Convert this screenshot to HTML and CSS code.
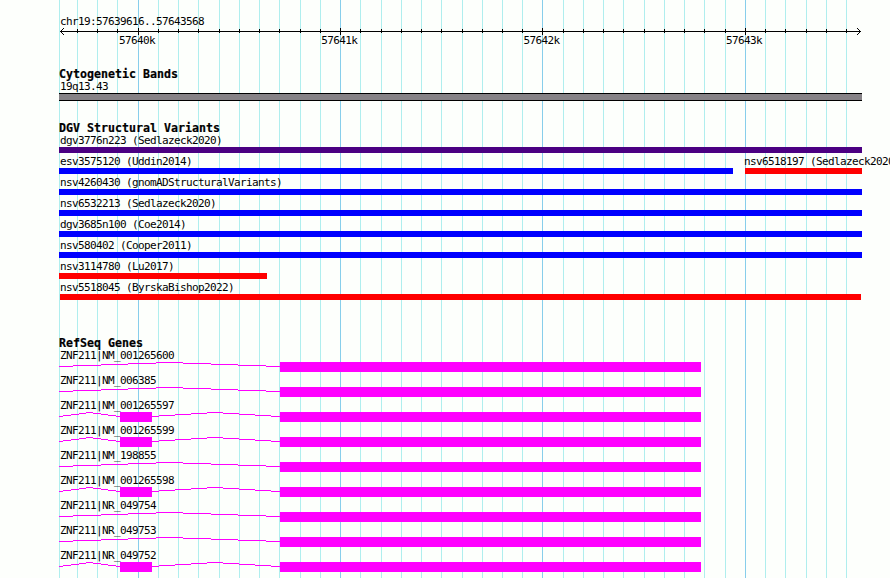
FILE: index.html
```html
<!DOCTYPE html>
<html lang="en">
<head>
    <meta charset="UTF-8">
    <meta name="viewport" content="width=device-width, initial-scale=1.0">
    <title>chr19:57639616..57643568</title>
    <link rel="stylesheet" href="styles.css">
</head>
<body>
    <div class="browser">
        <svg class="grid" width="890" height="578">
            <path class="minor" id="minorGrid"/>
            <path class="major" id="majorGrid"/>
        </svg>

        <div class="ruler">
            <div class="label">chr19:57639616..57643568</div>
            <svg class="axis" width="803" height="7">
                <path d="M1 3.5H802"/>
                <path id="ticks"/>
                <path d="M1 3h1v1h-1z M2 2h1v1h-1z M2 4h1v1h-1z M3 1h1v1h-1z M3 5h1v1h-1z M4 0h1v1h-1z M4 6h1v1h-1z" class="arrow"/>
                <path d="M801 3h1v1h-1z M800 2h1v1h-1z M800 4h1v1h-1z M799 1h1v1h-1z M799 5h1v1h-1z M798 0h1v1h-1z M798 6h1v1h-1z" class="arrow"/>
            </svg>
            <div class="positions">
                <span>57640k</span>
                <span>57641k</span>
                <span>57642k</span>
                <span>57643k</span>
            </div>
        </div>

        <div class="track cytoband">
            <h2>Cytogenetic Bands</h2>
            <div class="label">19q13.43</div>
            <div class="band"></div>
        </div>

        <div class="track variants">
            <h2>DGV Structural Variants</h2>
            <div class="row">
                <div class="feature full"><div class="label">dgv3776n223 (Sedlazeck2020)</div><div class="bar complex"></div></div>
            </div>
            <div class="row">
                <div class="feature uddin"><div class="label">esv3575120 (Uddin2014)</div><div class="bar loss-gain"></div></div>
                <div class="feature right"><div class="label">nsv6518197 (Sedlazeck2020)</div><div class="bar loss"></div></div>
            </div>
            <div class="row">
                <div class="feature full"><div class="label">nsv4260430 (gnomADStructuralVariants)</div><div class="bar loss-gain"></div></div>
            </div>
            <div class="row">
                <div class="feature full"><div class="label">nsv6532213 (Sedlazeck2020)</div><div class="bar loss-gain"></div></div>
            </div>
            <div class="row">
                <div class="feature full"><div class="label">dgv3685n100 (Coe2014)</div><div class="bar loss-gain"></div></div>
            </div>
            <div class="row">
                <div class="feature full"><div class="label">nsv580402 (Cooper2011)</div><div class="bar loss-gain"></div></div>
            </div>
            <div class="row">
                <div class="feature lu"><div class="label">nsv3114780 (Lu2017)</div><div class="bar loss"></div></div>
            </div>
            <div class="row">
                <div class="feature full"><div class="label">nsv5518045 (ByrskaBishop2022)</div><div class="bar loss inset"></div></div>
            </div>
        </div>

        <div class="track genes">
            <h2>RefSeq Genes</h2>
            <div id="geneList"></div>
        </div>
    </div>

    <script>
        const minor = [59, 77, 97, 117, 158, 178, 198, 219, 239, 259, 279, 300, 320,
            360, 381, 401, 421, 441, 462, 482, 502, 522, 563, 583, 603, 623, 644,
            664, 684, 704, 725, 765, 785, 806, 826, 846];
        const major = [138, 340, 542, 745];

        const lines = (xs, y, h) => xs.map(x => `M${x + 0.5} ${y}v${h}`).join('');
        document.getElementById('minorGrid').setAttribute('d', lines(minor, 0, 578));
        document.getElementById('majorGrid').setAttribute('d', lines(major, 0, 578));

        // axis starts at x = 59, the first grid line has no tick
        document.getElementById('ticks').setAttribute('d',
            lines(minor.slice(1).map(x => x - 59), 1, 4) + lines(major.map(x => x - 59), 0, 7));

        // each intron climbs one pixel per step up to the middle and back down
        function intron(stops) {
            let d = '';
            for (let i = 0; i < stops.length - 1; i++) {
                d += `M${stops[i]} ${Math.abs(i - 4) + 0.5}H${stops[i + 1]}`;
            }
            return `<path class="intron" d="${d}"/>`;
        }

        const single = intron([0, 14, 42, 69, 97, 124, 152, 179, 207, 221]);
        const spliced = intron([0, 4, 12, 20, 27, 34, 42, 49, 57, 61]) +
            '<rect class="exon" x="61" width="32" height="10"/>' +
            intron([93, 100, 116, 132, 148, 164, 180, 196, 212, 221]);

        const genes = [
            ['NM_001265600', single],
            ['NM_006385', single],
            ['NM_001265597', spliced],
            ['NM_001265599', spliced],
            ['NM_198855', single],
            ['NM_001265598', spliced],
            ['NR_049754', single],
            ['NR_049753', single],
            ['NR_049752', spliced]
        ];

        document.getElementById('geneList').innerHTML = genes.map(([name, parts]) => `
            <div class="gene">
                <div class="label">ZNF211|${name}</div>
                <svg width="642" height="10">${parts}<rect class="exon" x="221" width="421" height="10"/></svg>
            </div>`).join('');
    </script>
</body>
</html>
```

FILE: styles.css
```css
* {
    margin: 0;
    padding: 0;
    box-sizing: border-box;
}

body {
    background-color: #fdfffc;
    overflow: hidden;
}

.browser {
    position: relative;
    width: 890px;
    height: 578px;
    padding: 16px 0 0 59px;
    overflow: hidden;
    color: #000;
    font-family: "DejaVu Sans Mono", "Liberation Mono", monospace;
    font-size: 11px;
}

svg {
    display: block;
    shape-rendering: crispEdges;
}

.grid {
    position: absolute;
    top: 0;
    left: 0;
    z-index: -1;
}

.grid path {
    fill: none;
    stroke-width: 1;
}

.grid .minor {
    stroke: #afeeee;
}

.grid .major {
    stroke: #87ceeb;
}

.label,
.positions {
    height: 12px;
    line-height: 12px;
    letter-spacing: -0.622px;
    white-space: nowrap;
}

.label {
    padding-left: 1px;
}

h2 {
    height: 13px;
    line-height: 13px;
    font-size: 11.6px;
    font-weight: bold;
    letter-spacing: 0.016px;
    -webkit-text-stroke: 0.2px #000;
}

/* ruler */
.ruler {
    height: 52px;
}

.axis path {
    fill: none;
    stroke: #000;
}

.axis .arrow {
    fill: #000;
    stroke: none;
}

.positions {
    display: flex;
    gap: 166.3px;
    padding-left: 60px;
}

.positions span {
    width: 36px;
}

/* tracks */
.cytoband {
    height: 54px;
}

.band {
    width: 803px;
    height: 8px;
    background-color: #868286;
    border-top: 1px solid #000;
    border-bottom: 1px solid #000;
}

.variants {
    height: 215px;
}

.row {
    display: flex;
    height: 21px;
}

.full {
    width: 803px;
}

.uddin {
    width: 674px;
    margin-right: 12px;
}

.right {
    width: 117px;
}

.right .label {
    padding-left: 0;
    margin-left: -1px;
}

.lu {
    width: 208px;
}

.bar {
    height: 6px;
}

.complex {
    background-color: #4b0082;
}

.loss-gain {
    background-color: #0000ff;
}

.loss {
    background-color: #ff0000;
}

.inset {
    margin: 0 1px;
}

.gene {
    height: 25px;
}

.intron {
    fill: none;
    stroke: #ff00ff;
}

.exon {
    fill: #ff00ff;
}
```
